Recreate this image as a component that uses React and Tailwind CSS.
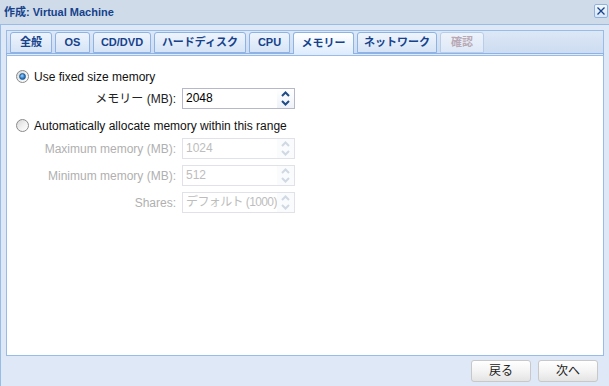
import React from 'react';

const font = "font-['Liberation_Sans','Noto_Sans_CJK_JP',sans-serif]";

const tabs = [
    { label: '全般', w: 'w-[42px]' },
    { label: 'OS', w: 'w-[35px]' },
    { label: 'CD/DVD', w: 'w-[58px]' },
    { label: 'ハードディスク', w: 'w-[92px]' },
    { label: 'CPU', w: 'w-[41px]' },
    { label: 'メモリー', w: 'w-[61px]', active: true },
    { label: 'ネットワーク', w: 'w-[80px]' },
    { label: '確認', w: 'w-[44px]', disabled: true },
];

const Radio = ({ checked }) => (
    <span className="flex h-[13px] w-[13px] items-center justify-center rounded-full border border-[#8a8a8a] bg-gradient-to-br from-[#d6d6d6] via-[#f0f0f0] to-white">
        {checked && (
            <span className="h-[7px] w-[7px] rounded-full border border-[#1c5a96] bg-[radial-gradient(circle_at_40%_35%,#9fd3ff,#2a78c4_60%,#0d4a86)]" />
        )}
    </span>
);

const Chevron = ({ up, disabled }) => (
    <svg width="9" height="6" viewBox="0 0 9 6">
        <polyline
            points={up ? '1,5 4.5,1.5 8,5' : '1,1 4.5,4.5 8,1'}
            fill="none"
            stroke={disabled ? '#cfd8e3' : '#1f4c86'}
            strokeWidth="2"
        />
    </svg>
);

const SpinField = ({ label, value, disabled, tight }) => (
    <div className="flex h-[21px] items-center">
        <div className={`w-[170px] pr-[1px] text-right text-[12px] ${disabled ? 'text-[#b0b0b0]' : 'text-[#222]'}`}>{label}</div>
        <div className={`ml-[5px] flex h-[21px] w-[113px] border ${disabled ? 'border-[#e0e2e8]' : 'border-[#b5b8c8]'} bg-white`}>
            <div className={`flex-1 overflow-hidden whitespace-nowrap pl-[3px] text-[12px] leading-[19px] ${tight ? 'tracking-[-0.6px]' : ''} ${disabled ? 'text-[#bdbdbd]' : 'text-[#000]'}`}>{value}</div>
            <div className={`flex w-[17px] flex-col ${disabled ? 'bg-[#fafbfc]' : 'bg-gradient-to-b from-white to-[#eef2f8]'}`}>
                <div className="flex flex-1 items-center justify-center"><Chevron up disabled={disabled} /></div>
                <div className="flex flex-1 items-center justify-center"><Chevron disabled={disabled} /></div>
            </div>
        </div>
    </div>
);

const App = () => {
    return (
        <div className={`h-[386px] w-[609px] overflow-hidden bg-[#dfe8f6] ${font}`}>
            {/* title bar */}
            <div className="flex h-[25px] items-start justify-between border-b border-[#99bbe8] bg-[#cfdbe9] pl-[4px] pr-[1px]">
                <div className="pt-[4px] text-[11px] font-bold text-[#15428b]">作成: Virtual Machine</div>
                <div className="mt-[4px] flex h-[14px] w-[14px] items-center justify-center rounded-[2px] border border-[#8fb1de] bg-gradient-to-b from-[#f3f7fd] to-[#d9e6f7]">
                    <svg width="8" height="8" viewBox="0 0 8 8">
                        <path d="M0.5 0.5 L7.5 7.5 M7.5 0.5 L0.5 7.5" stroke="#15428b" strokeWidth="1.3" />
                    </svg>
                </div>
            </div>

            <div className="h-[361px] border-l border-[#99bbe8] pl-[5px] pt-[5px]">
                {/* tab panel */}
                <div className="w-[598px]">
                    <div className="flex h-[23px] items-start gap-[3px] border-x border-t border-[#99bbe8] bg-gradient-to-b from-[#dde8f6] to-[#cddcf1] pl-[3px] pt-[1px]">
                        {tabs.map(t => (
                            <div
                                key={t.label}
                                className={`${t.w} flex items-center justify-center rounded-t-[3px] border border-[#8db2e3] text-[11px] font-bold ${
                                    t.active
                                        ? 'relative z-10 h-[22px] border-b-0 bg-gradient-to-b from-white to-[#deecfd] text-[#15428b]'
                                        : t.disabled
                                        ? 'h-[21px] border-[#b9cde9] bg-gradient-to-b from-[#eef3fb] to-[#dde8f7] text-[#b9a9b4]'
                                        : 'h-[21px] bg-gradient-to-b from-[#eef4fc] to-[#d6e4f6] text-[#15428b]'
                                }`}>
                                {t.label}
                            </div>
                        ))}
                    </div>
                    <div className="h-[2px] border-x border-t border-[#8db2e3] bg-[#deecfd]" />
                    <div className="h-[301px] border border-[#99bbe8] bg-white">
                        <div className="mt-[12px] flex h-[17px] items-center pl-[9px]">
                            <Radio checked />
                            <span className="ml-[5px] text-[12px] text-[#111]">Use fixed size memory</span>
                        </div>
                        <div className="mt-[3px]">
                            <SpinField label="メモリー (MB):" value="2048" />
                        </div>
                        <div className="mt-[8px] flex h-[17px] items-center pl-[9px]">
                            <Radio />
                            <span className="ml-[5px] text-[12px] text-[#111]">Automatically allocate memory within this range</span>
                        </div>
                        <div className="mt-[4px] flex flex-col gap-[6px]">
                            <SpinField label="Maximum memory (MB):" value="1024" disabled />
                            <SpinField label="Minimum memory (MB):" value="512" disabled />
                            <SpinField label="Shares:" value="デフォルト (1000)" disabled tight />
                        </div>
                    </div>
                </div>

                {/* footer buttons */}
                <div className="flex w-[592px] justify-end gap-[7px] pt-[4px]">
                    {['戻る', '次へ'].map(b => (
                        <div key={b} className="flex h-[22px] w-[60px] items-center justify-center rounded-[3px] border border-[#c8c8c8] bg-gradient-to-b from-white via-[#f4f4f4] to-[#e4e4e4] text-[12px] text-[#222]">
                            {b}
                        </div>
                    ))}
                </div>
            </div>
        </div>
    );
};

export default App;
